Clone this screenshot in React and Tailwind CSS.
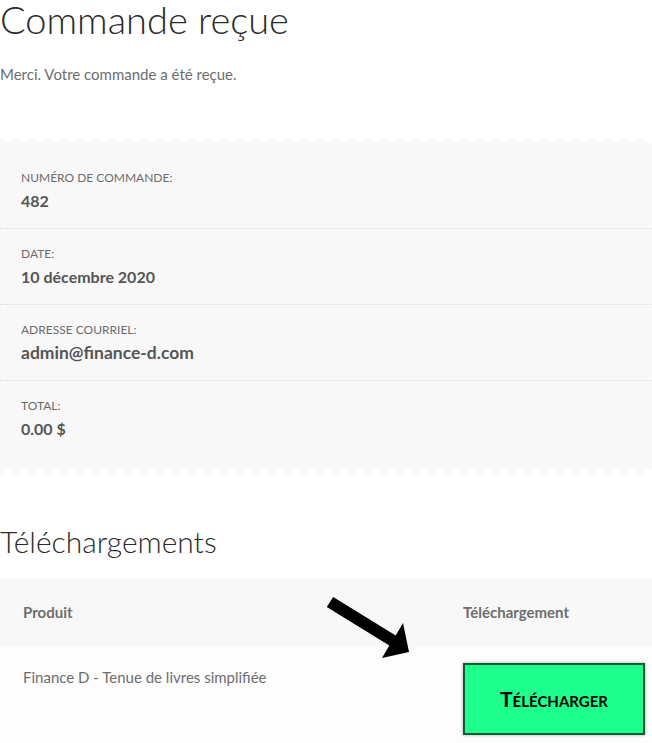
import React from 'react';

const details = [
  { label: 'Numéro de commande:', value: '482' },
  { label: 'Date:', value: '10 décembre 2020' },
  { label: 'Adresse courriel:', value: 'admin@finance-d.com', big: true },
  { label: 'Total:', value: '0.00 $' },
];

function Zigzag({ flip }) {
  const id = flip ? 'zz-bottom' : 'zz-top';
  return (
    <svg width="652" height="7" className="block">
      <defs>
        <pattern id={id} width="16" height="7" patternUnits="userSpaceOnUse">
          <polygon points={flip ? '0,0 16,0 16,7 8,0 0,7' : '0,0 8,7 16,0 16,7 0,7'} fill="#f8f8f8" />
        </pattern>
      </defs>
      <rect width="652" height="7" fill={`url(#${id})`} />
    </svg>
  );
}

export default function App() {
  return (
    <div className="relative w-[652px] min-h-[743px] overflow-hidden bg-white font-['Lato','Liberation_Sans',sans-serif]">
      {/* titre */}
      <h1 className="text-[38px] leading-[38px] font-light text-[#2b2b2b]">Commande reçue</h1>
      <p className="mt-[27px] text-[15px] leading-[18px] text-[#6d6d6d]">Merci. Votre commande a été reçue.</p>

      {/* récapitulatif */}
      <div className="mt-[54px]">
        <Zigzag />
        <div className="bg-[#f8f8f8] pt-[9px] pb-[11px]">
          {details.map((d, i) => (
            <div
              key={d.label}
              className={`px-[21px] pt-[16px] ${i < details.length - 1 ? 'pb-[15px] border-b border-dotted border-[#dcdcdc]' : 'pb-[16px]'}`}
            >
              <div className="text-[12px] leading-[18px] uppercase text-[#6d6d6d]">{d.label}</div>
              <div className={`mt-[1px] font-bold leading-[25px] text-[#555] ${d.big ? 'text-[17.5px]' : 'text-[16px]'}`}>{d.value}</div>
            </div>
          ))}
        </div>
        <Zigzag flip />
      </div>

      {/* téléchargements */}
      <h2 className="mt-[48px] text-[30px] leading-[36px] font-light text-[#2b2b2b]">Téléchargements</h2>
      <div className="mt-[19px]">
        <div className="grid grid-cols-[463px_1fr] h-[69px] items-center bg-[#f8f8f8] text-[15px] font-bold text-[#6d6d6d]">
          <div className="pl-[23px]">Produit</div>
          <div>Téléchargement</div>
        </div>
        <div className="grid grid-cols-[463px_1fr] bg-[#fdfdfd] pt-[16px] pb-[8px]">
          <div className="pl-[23px] pt-[4px] text-[15px] leading-[20px] text-[#6d6d6d]">Finance D - Tenue de livres simplifiée</div>
          <div>
            <button className="w-[182px] h-[72px] border-2 border-[#0f5c30] bg-[#1eff8c] shadow-[0_0_3px_rgba(0,0,0,0.35)] text-[21px] font-bold [font-variant:small-caps] text-black">
              Télécharger
            </button>
          </div>
        </div>
      </div>

      {/* flèche */}
      <svg className="absolute left-0 top-0 pointer-events-none" width="652" height="743">
        <polygon
          points="333.2,596.9 395.7,635.4 403,623 409,652 382,658 389.3,645.6 326.8,607.1"
          fill="#000"
        />
      </svg>
    </div>
  );
}
